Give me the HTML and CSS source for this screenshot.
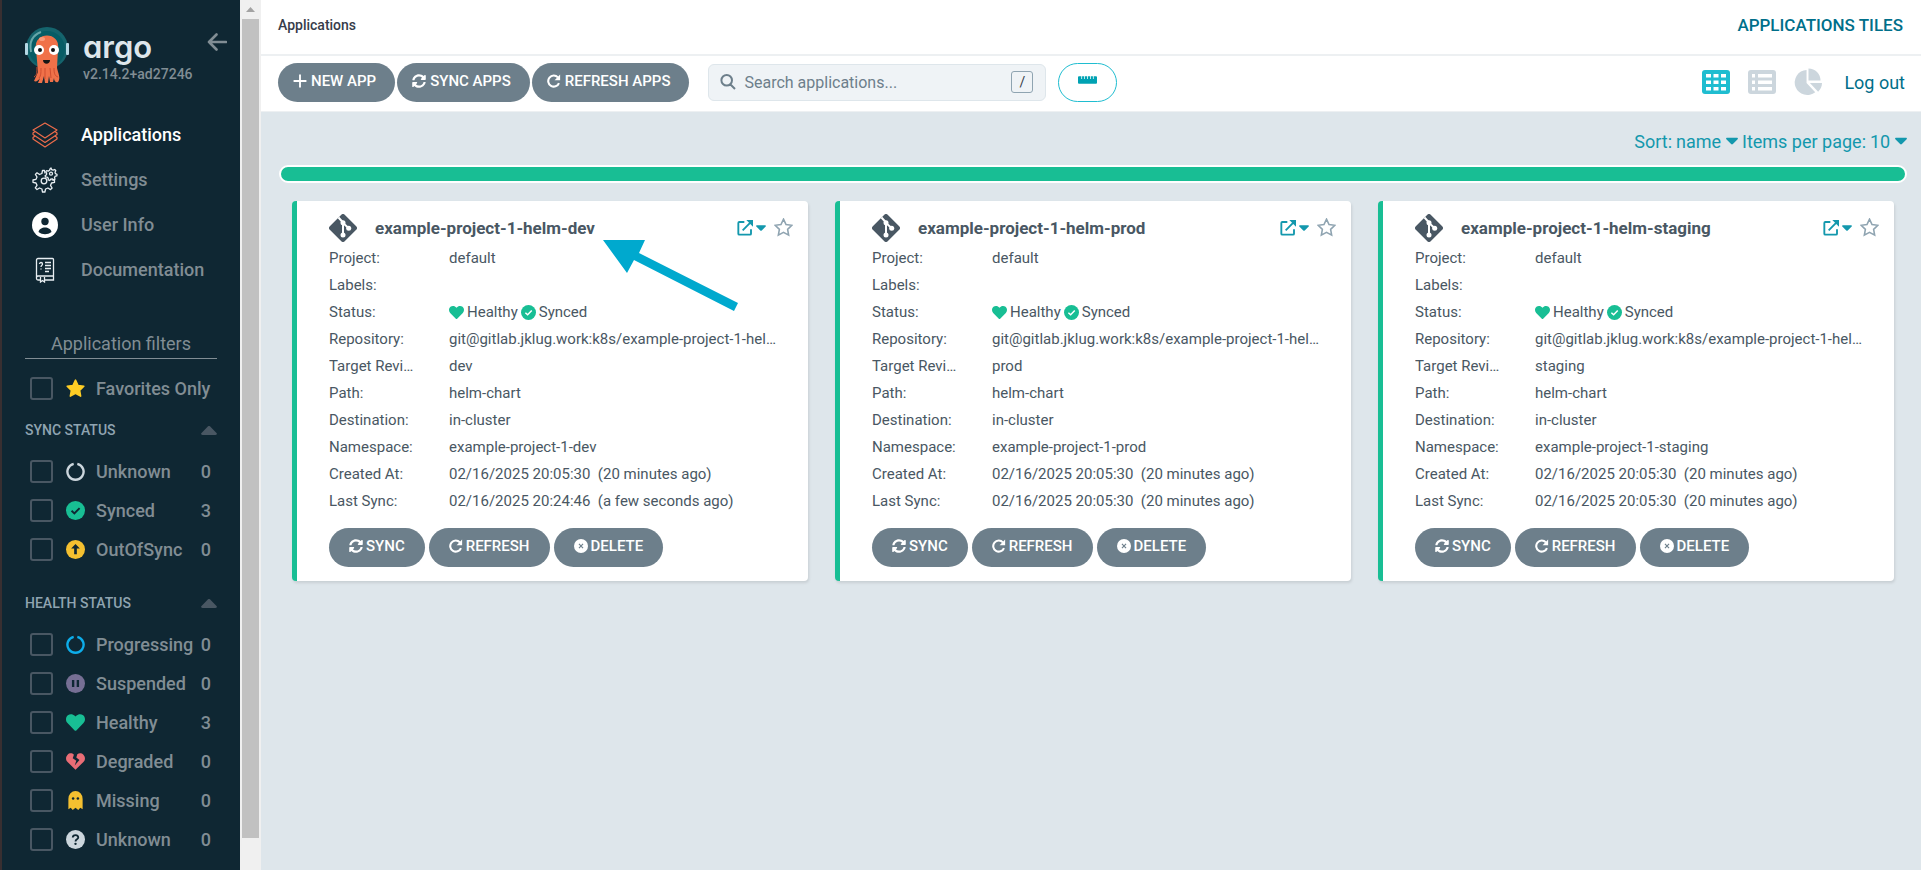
FILE: index.html
```html
<!DOCTYPE html>
<html lang="en">
<head>
    <meta charset="UTF-8">
    <meta name="viewport" content="width=device-width, initial-scale=1.0">
    <title>Applications Tiles - Argo CD</title>
    <link rel="stylesheet" href="styles.css">
</head>
<body>
<!-- shared icons -->
<svg class="sprite" aria-hidden="true">
    <symbol id="i-sync" viewBox="0 0 512 512"><path d="M370.7 133.3C339.5 104 298.9 88 255.8 88c-77.5.1-144.3 53.2-162.8 126.9-1.3 5.4-6.1 9.1-11.7 9.1H24.1c-7.5 0-13.2-6.8-11.8-14.2C33.9 94.9 134.8 8 256 8c66.4 0 126.8 26.1 171.3 68.7L463 41c15.1-15.1 41-4.4 41 17v134c0 13.300-10.700 24-24 24H346c-21.400 0-32.100-25.900-17-41l41.700-41.700zM32 296h134c21.400 0 32.100 25.900 17 41l-41.800 41.800c31.300 29.300 71.800 45.300 114.900 45.300 77.400-.1 144.300-53.100 162.800-126.800 1.300-5.400 6.100-9.100 11.700-9.100h57.300c7.500 0 13.200 6.800 11.800 14.200C478.100 417.100 377.200 504 256 504c-66.400 0-126.800-26.100-171.300-68.700L49 471c-15.100 15.100-41 4.400-41-17V320c0-13.300 10.700-24 24-24z"/></symbol>
    <symbol id="i-redo" viewBox="0 0 24 24"><path d="M20.500 15.500a9.500 9.500 0 1 1-1.800-9.700" fill="none" stroke="currentColor" stroke-width="3.600"/><path d="M22.500 1v9.500H13z"/></symbol>
    <symbol id="i-plus" viewBox="0 0 24 24"><path d="M10.400 1h3.200v9.400H23v3.200h-9.400V23h-3.200v-9.400H1v-3.200h9.400z"/></symbol>
    <symbol id="i-cancel" viewBox="0 0 24 24"><circle cx="12" cy="12" r="12"/><path d="M8.500 8.500l7 7m0-7l-7 7" stroke="#6d7f8b" stroke-width="2"/></symbol>
    <symbol id="i-heart" viewBox="0 0 512 512"><path d="M462.300 62.600C407.500 15.900 326 24.300 275.700 76.200L256 96.500l-19.700-20.300C186.100 24.300 104.500 15.900 49.700 62.600c-62.800 53.600-66.100 149.800-9.900 207.900l193.500 199.800c12.500 12.900 32.800 12.900 45.300 0l193.500-199.800c56.300-58.100 53-154.300-9.800-207.900z"/></symbol>
    <symbol id="i-check" viewBox="0 0 24 24"><circle cx="12" cy="12" r="12"/><path d="M7 12.300l3.600 3.400 6.600-6.800" fill="none" stroke-width="2.400"/></symbol>
    <symbol id="i-ring" viewBox="0 0 24 24"><path d="M14.300 2.300a10.200 10.200 0 1 1-4.600 0" fill="none" stroke="currentColor" stroke-width="3"/></symbol>
    <symbol id="i-caret" viewBox="0 0 16 9"><path d="M1.500 0h13c1.300 0 1.900 1.200 1 2.100L9.200 8.500a1.700 1.700 0 0 1-2.400 0L.5 2.100C-.4 1.200.2 0 1.500 0z"/></symbol>
    <symbol id="i-star" viewBox="0 0 24 24"><path d="M12 1.500l3.200 6.700 7.300 1-5.300 5.100 1.300 7.300-6.500-3.500-6.500 3.500 1.300-7.300L1.500 9.200l7.300-1z"/></symbol>
    <symbol id="i-external" viewBox="0 0 24 24"><path d="M11 3H3.500A1.500 1.500 0 0 0 2 4.500v16A1.500 1.500 0 0 0 3.500 22h16a1.500 1.500 0 0 0 1.500-1.500V14M8.500 15.500L20 4" fill="none" stroke="currentColor" stroke-width="2.800"/><path d="M14 0h10v10z"/></symbol>
    <symbol id="i-git" viewBox="0 0 28 28"><path d="M12.300.8a2.400 2.400 0 0 1 3.400 0l11.500 11.500a2.400 2.400 0 0 1 0 3.400L15.700 27.200a2.400 2.400 0 0 1-3.400 0L.8 15.700a2.400 2.400 0 0 1 0-3.400z"/><path d="M9.500 3.500l4.500 5v13M14 9l5.500 5" fill="none" stroke="#fff" stroke-width="2"/><g fill="#fff"><circle cx="14" cy="8.800" r="2.500"/><circle cx="19.700" cy="14.300" r="2.500"/><circle cx="14" cy="21" r="2.500"/></g></symbol>
</svg>

<div class="layout">
    <aside class="sidebar">
        <div class="logo">
            <svg class="mascot" viewBox="0 0 44 56" aria-hidden="true">
                <circle cx="22" cy="21" r="21" fill="#15646d"/>
                <circle cx="22" cy="22" r="18" fill="#075c65"/>
                <path d="M6 25C4 15 8 8 16 5" fill="none" stroke="#66a5a8" stroke-width="2"/>
                <path d="M11 22C8 4 36 4 33 22l-1 19c1 5 4 10 1 14-2 1-4-1-4-4l-1 4h-3l-1-6-1 7h-3l-1-7-2 7h-4l2-5c-2 3-4 4-6 3l4-9z" fill="#f07149"/>
                <path d="M12 40c0 6 0 8-3 10m7-9c0 5 0 8-2 10m6-10v11m5-11l1 10m3-10c0 6 1 8 4 9" fill="none" stroke="#cf4e30" stroke-width="1"/>
                <ellipse cx="17" cy="12" rx="3" ry="2" fill="#fa9b7b"/>
                <circle cx="14" cy="23" r="5" fill="#fff"/><circle cx="29" cy="23" r="5" fill="#fff"/>
                <circle cx="15" cy="23" r="2" fill="#111"/><circle cx="28" cy="23" r="2" fill="#111"/>
                <path d="M18 33h7c0 5-7 5-7 0z" fill="#161616"/>
                <rect x="0" y="16" width="3" height="12" rx="1" fill="#b5d8e5"/>
                <rect x="41" y="16" width="3" height="12" rx="1" fill="#b5d8e5"/>
            </svg>
            <div class="brand">
                <span class="brand-name">argo</span>
                <span class="version">v2.14.2+ad27246</span>
            </div>
            <button class="collapse" aria-label="Collapse sidebar">
                <svg viewBox="0 0 20 18"><path d="M19 9H2M9.500 1.500L2 9l7.500 7.500" fill="none" stroke="currentColor" stroke-width="2.600" stroke-linecap="round" stroke-linejoin="round"/></svg>
            </button>
        </div>

        <nav class="nav">
            <a href="#" class="active">
                <svg viewBox="0 0 26 26" fill="none" stroke="#ee6c4b" stroke-width="1.200" stroke-linejoin="round"><path d="M13 1l12 7-12 8L1 8z"/><path d="M3 9.500L1 11v1.500l12 8 12-8V11l-2-1.500"/><path d="M3 14l-2 1.500V17l12 8 12-8v-1.500L23 14"/></svg>
                Applications
            </a>
            <a href="#">
                <svg viewBox="0 0 26 26" fill="none" stroke="#e8eef2" stroke-width="1.300" stroke-linejoin="round"><circle cx="12" cy="14" r="2.800"/><path d="M13 6.500l-.5-3h-2l-.6 3-2.400 1L5 5.800 3.400 7.400 5 10l-1 2.300-3 .7v2.300l3 .7 1 2.300-1.700 2.600L5 22.500 7.500 21l2.400 1 .6 3h2.400l.7-3 2.300-1 2.600 1.600 1.600-1.600-1.600-2.600 1-2.400 3-.6v-2.200l-2.800-.4"/><path d="M19 1l.6 1.600 1.500.6 1.600-.7 1.100 1.200-.8 1.500.5 1.500 1.500.6-.1 1.500-1.700.4-.7 1.400.5 1.500-1.300.8-1.500-1-1.500.3-1 1.300-1.500-.5.1-1.700-1.100-1.200-1.700.1-.4-1.500 1.400-1 .2-1.500-1-1.400 1-1.200 1.600.5 1.300-.8.500-1.600z"/><circle cx="19" cy="6.700" r="1.500"/></svg>
                Settings
            </a>
            <a href="#">
                <svg viewBox="0 0 26 26"><circle cx="13" cy="13" r="13" fill="#fff"/><circle cx="13" cy="9.500" r="3.700" fill="#0f2733"/><path d="M6.500 20c1-6 12-6 13 0-4 3-9 3-13 0z" fill="#0f2733"/></svg>
                User Info
            </a>
            <a href="#">
                <svg viewBox="0 0 26 26" fill="none" stroke="#e8eef2" stroke-width="1.300"><path d="M21.500 19V2.500a1 1 0 0 0-1-1H6A1.500 1.500 0 0 0 4.500 3v18.500A1.500 1.500 0 0 0 6 23h2m5 0h8.500v-4H6a1.500 1.500 0 0 0-1.500 1.500M8.500 20v5l2-1.500 2 1.500v-5M13 5.500h6M13 8.500h6M13 11.500h6M13 14.500h4M7.500 7c0-2 3-2 3 0 0 1.500-1.500 1-1.500 3m0 1.500v1"/></svg>
                Documentation
            </a>
        </nav>

        <section class="filters">
            <h2>Application filters</h2>
            <label class="filter">
                <input type="checkbox">
                <svg class="c-star"><use href="#i-star"/></svg>
                <span>Favorites Only</span>
            </label>

            <div class="filter-group">
                <h3>Sync Status <svg><use href="#i-caret"/></svg></h3>
                <label class="filter">
                    <input type="checkbox">
                    <svg class="c-light"><use href="#i-ring"/></svg>
                    <span>Unknown</span><b>0</b>
                </label>
                <label class="filter">
                    <input type="checkbox">
                    <svg class="c-green tick"><use href="#i-check"/></svg>
                    <span>Synced</span><b>3</b>
                </label>
                <label class="filter">
                    <input type="checkbox">
                    <svg class="c-yellow" viewBox="0 0 24 24"><circle cx="12" cy="12" r="12"/><path d="M12 5l5.500 5.600h-3.800V18h-3.400v-7.400H6.500z" fill="#0f2733"/></svg>
                    <span>OutOfSync</span><b>0</b>
                </label>
            </div>

            <div class="filter-group">
                <h3>Health Status <svg><use href="#i-caret"/></svg></h3>
                <label class="filter">
                    <input type="checkbox">
                    <svg class="c-blue"><use href="#i-ring"/></svg>
                    <span>Progressing</span><b>0</b>
                </label>
                <label class="filter">
                    <input type="checkbox">
                    <svg class="c-purple" viewBox="0 0 24 24"><circle cx="12" cy="12" r="12"/><path d="M7.500 7.500h3v9h-3zm6 0h3v9h-3z" fill="#0f2733"/></svg>
                    <span>Suspended</span><b>0</b>
                </label>
                <label class="filter">
                    <input type="checkbox">
                    <svg class="c-green"><use href="#i-heart"/></svg>
                    <span>Healthy</span><b>3</b>
                </label>
                <label class="filter">
                    <input type="checkbox">
                    <svg class="c-red" viewBox="0 0 24 24"><path d="M10 3.500C7.500 1 4 1.300 2 3.500c-2.700 3-2.500 6.500 0 9.200L12 22.500l10-9.800c2.500-2.700 2.700-6.200 0-9.200-2.200-2.300-5.500-2.300-7.700-.8L13 7l4 3-6 7 2-6-4.500-3z"/></svg>
                    <span>Degraded</span><b>0</b>
                </label>
                <label class="filter">
                    <input type="checkbox">
                    <svg class="c-yellow" viewBox="0 0 24 24"><path d="M3 10a9 10 0 0 1 18 0v13l-3-2-2.500 3-3.500-3-3.500 3L6 21l-3 2z"/><circle cx="9" cy="9.500" r="1.600" fill="#0f2733"/><circle cx="15" cy="9.500" r="1.600" fill="#0f2733"/></svg>
                    <span>Missing</span><b>0</b>
                </label>
                <label class="filter">
                    <input type="checkbox">
                    <svg class="c-light" viewBox="0 0 24 24"><circle cx="12" cy="12" r="12"/><path d="M8.500 9.500c.3-4.300 7-4 7 0 0 2.500-3.500 2-3.500 5" fill="none" stroke="#0f2733" stroke-width="2.300"/><circle cx="12" cy="17.500" r="1.500" fill="#0f2733"/></svg>
                    <span>Unknown</span><b>0</b>
                </label>
            </div>
        </section>
    </aside>

    <div class="scrollbar"><i class="up"></i><div class="thumb"></div></div>

    <main class="main">
        <header class="topbar">
            <span class="breadcrumb">Applications</span>
            <h1>Applications Tiles</h1>
        </header>

        <div class="toolbar">
            <div class="actions">
                <button class="btn"><svg><use href="#i-plus"/></svg>New App</button>
                <button class="btn"><svg><use href="#i-sync"/></svg>Sync Apps</button>
                <button class="btn"><svg><use href="#i-redo"/></svg>Refresh Apps</button>
            </div>
            <div class="search">
                <svg viewBox="0 0 16 16"><path d="M10.500 10.500l4.500 4.500M12 6.300a5.300 5.300 0 1 1-10.600 0 5.300 5.300 0 0 1 10.600 0z" fill="none" stroke="currentColor" stroke-width="2"/></svg>
                <input type="text" placeholder="Search applications..." aria-label="Search applications">
                <kbd>/</kbd>
            </div>
            <button class="ruler" aria-label="Toggle progress bar">
                <svg viewBox="0 0 20 8"><path d="M1 0h2.500v3h.8V0h2v3h.8V0h2.500v3h.8V0h2.500v3h.8V0h2v3h.8V0H19a1 1 0 0 1 1 1v6a1 1 0 0 1-1 1H1a1 1 0 0 1-1-1V1a1 1 0 0 1 1-1z"/></svg>
            </button>
            <div class="views">
                <button class="on" aria-label="Tiles"><svg viewBox="0 0 28 24"><rect width="28" height="24" rx="3"/><path d="M4 4h5v3.500H4zm7.500 0h5v3.500h-5zm7.500 0h5v3.500h-5zM4 10.500h5V14H4zm7.500 0h5V14h-5zm7.500 0h5V14h-5zM4 17h5v3.500H4zm7.500 0h5v3.500h-5zm7.500 0h5v3.500h-5z" fill="#fff"/></svg></button>
                <button aria-label="List"><svg viewBox="0 0 28 24"><rect width="28" height="24" rx="3"/><path d="M4 4h3v3.500H4zm6 0h14v3.500H10zM4 10.500h3V14H4zm6 0h14V14H10zM4 17h3v3.500H4zm6 0h14v3.500H10z" fill="#fff"/></svg></button>
                <button aria-label="Summary"><svg viewBox="0 0 29 28"><path d="M13 1.500V15l9 9.500A13 13 0 1 1 13 1.500z"/><path d="M15 0c7 0 12.500 5.500 12.500 12.500H15zM16.500 15H29c0 3.500-1.500 6.500-4 9z"/></svg></button>
            </div>
            <a class="logout" href="#">Log out</a>
        </div>

        <div class="sorting">
            <label for="sort">Sort:</label>
            <select id="sort"><option>name</option></select>
            <svg><use href="#i-caret"/></svg>
            <label for="perPage">Items per page:</label>
            <select id="perPage"><option>10</option></select>
            <svg><use href="#i-caret"/></svg>
        </div>

        <div class="progress"></div>

        <div class="cards">
            <article class="card">
                <div class="card-head">
                    <svg class="git"><use href="#i-git"/></svg>
                    <h2>example-project-1-helm-dev</h2>
                    <button class="open" aria-label="Open links"><svg class="ext"><use href="#i-external"/></svg><svg class="caret"><use href="#i-caret"/></svg></button>
                    <button class="fav" aria-label="Favorite"><svg><use href="#i-star"/></svg></button>
                </div>
                <dl>
                    <dt>Project:</dt><dd>default</dd>
                    <dt>Labels:</dt><dd></dd>
                    <dt>Status:</dt><dd class="status"><svg><use href="#i-heart"/></svg>Healthy<svg><use href="#i-check"/></svg>Synced</dd>
                    <dt>Repository:</dt><dd>git@gitlab.jklug.work:k8s/example-project-1-helm.git</dd>
                    <dt>Target Revision:</dt><dd>dev</dd>
                    <dt>Path:</dt><dd>helm-chart</dd>
                    <dt>Destination:</dt><dd>in-cluster</dd>
                    <dt>Namespace:</dt><dd>example-project-1-dev</dd>
                    <dt>Created At:</dt><dd>02/16/2025 20:05:30 &nbsp;(20 minutes ago)</dd>
                    <dt>Last Sync:</dt><dd>02/16/2025 20:24:46 &nbsp;(a few seconds ago)</dd>
                </dl>
                <div class="card-actions">
                    <button class="btn"><svg><use href="#i-sync"/></svg>Sync</button>
                    <button class="btn"><svg><use href="#i-redo"/></svg>Refresh</button>
                    <button class="btn"><svg><use href="#i-cancel"/></svg>Delete</button>
                </div>
                <svg class="pointer" viewBox="0 0 136 72" aria-hidden="true"><path d="M0 0h42l-6 13 99 50-4 8-100-51-7 13z"/></svg>
            </article>

            <article class="card">
                <div class="card-head">
                    <svg class="git"><use href="#i-git"/></svg>
                    <h2>example-project-1-helm-prod</h2>
                    <button class="open" aria-label="Open links"><svg class="ext"><use href="#i-external"/></svg><svg class="caret"><use href="#i-caret"/></svg></button>
                    <button class="fav" aria-label="Favorite"><svg><use href="#i-star"/></svg></button>
                </div>
                <dl>
                    <dt>Project:</dt><dd>default</dd>
                    <dt>Labels:</dt><dd></dd>
                    <dt>Status:</dt><dd class="status"><svg><use href="#i-heart"/></svg>Healthy<svg><use href="#i-check"/></svg>Synced</dd>
                    <dt>Repository:</dt><dd>git@gitlab.jklug.work:k8s/example-project-1-helm.git</dd>
                    <dt>Target Revision:</dt><dd>prod</dd>
                    <dt>Path:</dt><dd>helm-chart</dd>
                    <dt>Destination:</dt><dd>in-cluster</dd>
                    <dt>Namespace:</dt><dd>example-project-1-prod</dd>
                    <dt>Created At:</dt><dd>02/16/2025 20:05:30 &nbsp;(20 minutes ago)</dd>
                    <dt>Last Sync:</dt><dd>02/16/2025 20:05:30 &nbsp;(20 minutes ago)</dd>
                </dl>
                <div class="card-actions">
                    <button class="btn"><svg><use href="#i-sync"/></svg>Sync</button>
                    <button class="btn"><svg><use href="#i-redo"/></svg>Refresh</button>
                    <button class="btn"><svg><use href="#i-cancel"/></svg>Delete</button>
                </div>
            </article>

            <article class="card">
                <div class="card-head">
                    <svg class="git"><use href="#i-git"/></svg>
                    <h2>example-project-1-helm-staging</h2>
                    <button class="open" aria-label="Open links"><svg class="ext"><use href="#i-external"/></svg><svg class="caret"><use href="#i-caret"/></svg></button>
                    <button class="fav" aria-label="Favorite"><svg><use href="#i-star"/></svg></button>
                </div>
                <dl>
                    <dt>Project:</dt><dd>default</dd>
                    <dt>Labels:</dt><dd></dd>
                    <dt>Status:</dt><dd class="status"><svg><use href="#i-heart"/></svg>Healthy<svg><use href="#i-check"/></svg>Synced</dd>
                    <dt>Repository:</dt><dd>git@gitlab.jklug.work:k8s/example-project-1-helm.git</dd>
                    <dt>Target Revision:</dt><dd>staging</dd>
                    <dt>Path:</dt><dd>helm-chart</dd>
                    <dt>Destination:</dt><dd>in-cluster</dd>
                    <dt>Namespace:</dt><dd>example-project-1-staging</dd>
                    <dt>Created At:</dt><dd>02/16/2025 20:05:30 &nbsp;(20 minutes ago)</dd>
                    <dt>Last Sync:</dt><dd>02/16/2025 20:05:30 &nbsp;(20 minutes ago)</dd>
                </dl>
                <div class="card-actions">
                    <button class="btn"><svg><use href="#i-sync"/></svg>Sync</button>
                    <button class="btn"><svg><use href="#i-redo"/></svg>Refresh</button>
                    <button class="btn"><svg><use href="#i-cancel"/></svg>Delete</button>
                </div>
            </article>
        </div>
    </main>
</div>
</body>
</html>
```

FILE: styles.css
```css
* {
    box-sizing: border-box;
}

body {
    margin: 0;
    font-family: Roboto, sans-serif;
    font-size: 14px;
    color: #495763;
    background: #dee6eb;
}

h1, h2, h3, dl, dd {
    margin: 0;
}

a {
    text-decoration: none;
}

button, select, input {
    font-family: inherit;
}

button {
    padding: 0;
    border: none;
    background: none;
}

svg {
    display: block;
    flex-shrink: 0;
}

svg:not([fill]) {
    fill: currentColor;
}

.sprite {
    position: absolute;
    width: 0;
    height: 0;
}

.layout {
    display: flex;
    height: 100vh;
}

/* sidebar */
.sidebar {
    width: 240px;
    flex-shrink: 0;
    padding: 27px 23px 0;
    overflow: hidden;
    border-left: 2px solid #382f31;
    background: #0f2733;
}

.logo {
    display: flex;
    height: 85px;
}

.mascot {
    width: 44px;
    height: 56px;
}

.brand {
    display: flex;
    flex-direction: column;
    flex: 1;
    margin-left: 14px;
}

.brand-name {
    height: 38px;
    line-height: 40px;
    font-family: Inter, sans-serif;
    font-size: 31px;
    font-weight: 600;
    font-feature-settings: "cv11";
    color: #dee6eb;
}

.version {
    line-height: 18px;
    font-weight: 500;
    color: #818d94;
}

.collapse {
    align-self: flex-start;
    margin: 6px -10px 0 0;
    color: #818d94;
}

.collapse svg {
    width: 20px;
    height: 18px;
}

.nav a {
    display: flex;
    align-items: center;
    gap: 23px;
    height: 45px;
    padding-left: 7px;
    font-size: 18px;
    font-weight: 500;
    color: #818d94;
}

.nav .active {
    color: #fff;
}

.nav svg {
    width: 26px;
    height: 26px;
}

.filters {
    margin-top: 40px;
}

.filters h2 {
    height: 27px;
    margin-bottom: 10px;
    line-height: 24px;
    border-bottom: 1px solid #818d94;
    font-size: 18px;
    font-weight: 400;
    text-align: center;
    color: #818d94;
}

.filter-group {
    padding-bottom: 12px;
}

.filters h3 {
    display: flex;
    align-items: center;
    justify-content: space-between;
    height: 44px;
    font-size: 14px;
    font-weight: 500;
    text-transform: uppercase;
    color: #8fa4b1;
}

.filters h3 svg {
    width: 16px;
    height: 9px;
    color: #495763;
    transform: rotate(180deg);
}

.filter {
    display: flex;
    align-items: center;
    height: 39px;
    padding: 0 6px 0 5px;
    font-size: 18px;
    font-weight: 500;
    color: #818d94;
}

.filter b {
    font-weight: 500;
}

.filter span {
    flex: 1;
    margin-left: 11px;
    white-space: nowrap;
}

.filter svg {
    width: 19px;
    height: 19px;
}

.filter input {
    appearance: none;
    width: 23px;
    height: 23px;
    margin: 0 13px 0 0;
    border: 2px solid #495763;
    border-radius: 3px;
}

.c-star {
    color: #ffce25;
    stroke: currentColor;
    stroke-width: 2px;
    stroke-linejoin: round;
}

.c-light { color: #ccd6dd; }
.c-green { color: #18be94; }
.c-yellow { color: #f4c030; }
.c-blue { color: #0dadea; }
.c-purple { color: #766f94; }
.c-red { color: #e96d76; }

.tick {
    stroke: #0f2733;
    stroke-width: 0;
}

/* sidebar scrollbar */
.scrollbar {
    display: flex;
    flex-direction: column;
    width: 21px;
    flex-shrink: 0;
    padding: 0 2px 32px;
    background: #f0f0f0;
}

.up {
    width: 9px;
    height: 5px;
    margin: 7px 4px;
    background: #a3a3a3;
    clip-path: polygon(50% 0, 100% 100%, 0 100%);
}

.thumb {
    flex: 1;
    background: #c1c1c1;
}

/* top bars */
.main {
    flex: 1;
    min-width: 0;
}

.topbar {
    display: flex;
    align-items: center;
    justify-content: space-between;
    height: 56px;
    padding: 0 18px 4px 17px;
    border-bottom: 2px solid #edf0f2;
    background: #fff;
}

.breadcrumb {
    font-weight: 500;
    color: #363c4a;
}

.topbar h1 {
    font-size: 17px;
    font-weight: 500;
    text-transform: uppercase;
    color: #006f8a;
}

.toolbar {
    display: flex;
    align-items: center;
    height: 56px;
    padding: 0 16px 3px 17px;
    border-bottom: 1px solid #edf0f2;
    background: #fff;
}

.actions {
    display: flex;
    gap: 2px;
}

.btn {
    display: flex;
    align-items: center;
    gap: 4px;
    height: 39px;
    padding: 0 19px 3px 15px;
    border-radius: 20px;
    background: #6d7f8b;
    font-size: 15px;
    font-weight: 500;
    text-transform: uppercase;
    color: #fff;
}

.btn svg {
    width: 14px;
    height: 14px;
}

.search {
    display: flex;
    align-items: center;
    gap: 8px;
    width: 338px;
    height: 37px;
    margin: 0 12px 0 19px;
    padding: 0 12px 0 11px;
    border: 1px solid #dee6eb;
    border-radius: 6px;
    background: #eff3f6;
    color: #6d7f8b;
}

.search svg {
    width: 16px;
    height: 16px;
}

.search input {
    flex: 1;
    min-width: 0;
    padding: 0;
    border: none;
    background: none;
    font-size: 16px;
}

.search input::placeholder {
    color: #6d7f8b;
}

.search kbd {
    width: 22px;
    height: 22px;
    border: 1px solid #8fa4b1;
    border-radius: 3px;
    line-height: 20px;
    font-family: inherit;
    font-size: 14px;
    text-align: center;
    color: #363c4a;
}

.ruler {
    display: flex;
    justify-content: center;
    width: 59px;
    height: 39px;
    padding-top: 12px;
    border: 1px solid #1fbdd0;
    border-radius: 20px;
    color: #00a2b3;
}

.ruler svg {
    width: 19px;
    height: 8px;
}

.views {
    display: flex;
    align-items: center;
    gap: 18px;
    margin-left: auto;
}

.views button {
    color: #ccd6dd;
}

.views .on {
    color: #1fbdd0;
}

.views svg {
    width: 28px;
    height: 28px;
}

.logout {
    margin-left: 22px;
    font-size: 18px;
    color: #006f8a;
}

.sorting {
    display: flex;
    align-items: center;
    justify-content: flex-end;
    gap: 4px;
    height: 53px;
    padding: 5px 14px 0;
    font-size: 18px;
    color: #1398ad;
}

.sorting select {
    appearance: none;
    padding: 0;
    border: none;
    background: none;
    font-size: 18px;
    color: inherit;
}

.sorting svg {
    width: 12px;
    height: 8px;
}

.progress {
    height: 18px;
    margin: 0 14px 0 18px;
    border: 2px solid #fff;
    border-radius: 9px;
    background: #18be94;
}

/* application tiles */
.cards {
    display: grid;
    grid-template-columns: repeat(3, 1fr);
    gap: 27px;
    padding: 18px 27px 0 31px;
}

.card {
    position: relative;
    padding: 11px 28px 14px 32px;
    border-left: 5px solid #18be94;
    border-radius: 4px;
    background: #fff;
    box-shadow: 1px 2px 3px rgba(0, 0, 0, 0.1);
}

.card-head {
    display: flex;
    align-items: center;
    height: 31px;
    margin: 0 -13px 2px 0;
}

.git {
    width: 28px;
    height: 28px;
}

.card-head h2 {
    flex: 1;
    margin-left: 18px;
    font-size: 17px;
    font-weight: 700;
}

.open {
    display: flex;
    align-items: center;
    gap: 3px;
    color: #1398ad;
}

.ext {
    width: 16px;
    height: 16px;
}

.caret {
    width: 10px;
    height: 6px;
}

.fav {
    margin-left: 8px;
    color: #8fa4b1;
}

.fav svg {
    width: 19px;
    height: 19px;
    fill: none;
    stroke: currentColor;
    stroke-width: 2px;
}

.card dl {
    display: grid;
    grid-template-columns: 86px minmax(0, 1fr);
    column-gap: 34px;
    line-height: 27px;
    font-size: 15px;
}

.card dt, .card dd {
    height: 27px;
    overflow: hidden;
    text-overflow: ellipsis;
    white-space: nowrap;
}

.status {
    display: flex;
    align-items: center;
    gap: 3px;
}

.status svg {
    width: 15px;
    height: 15px;
    color: #18be94;
    stroke: #fff;
    stroke-width: 0;
}

.card-actions {
    display: flex;
    gap: 4px;
    margin-top: 13px;
}

.card-actions .btn {
    gap: 3px;
    padding: 0 20px 3px;
}

/* callout arrow over the first tile */
.pointer {
    position: absolute;
    top: 39px;
    left: 306px;
    width: 136px;
    height: 72px;
    color: #00a9ce;
}
```
